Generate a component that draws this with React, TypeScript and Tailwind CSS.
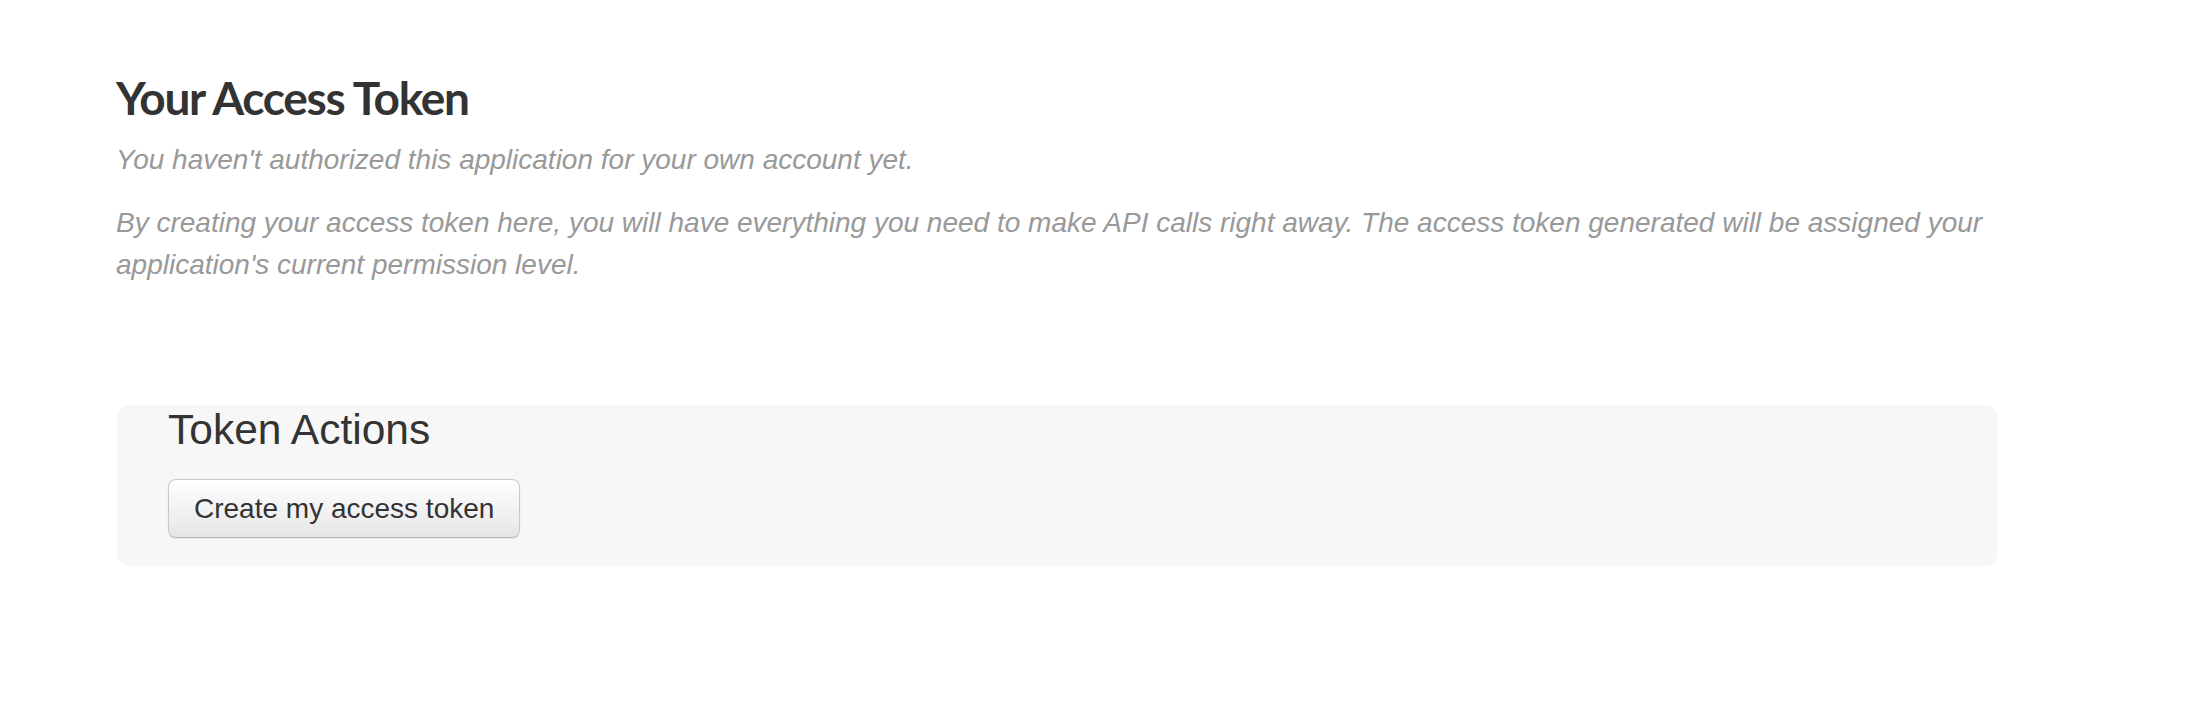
const App = () => {
  return (
    <div className="min-h-screen bg-white pl-[116px] pr-[199px] pt-[70px] font-['Liberation_Sans',Arial,sans-serif]">
      <h1 className="font-['Lato',sans-serif] font-bold text-[46px] leading-[56px] tracking-[-1.3px] text-[#333]">
        Your Access Token
      </h1>
      <p className="mt-[13px] text-[28px] leading-[42px] italic text-[#999]">
        You haven't authorized this application for your own account yet.
      </p>
      <p className="mt-[21px] text-[28px] leading-[42px] italic text-[#999]">
        By creating your access token here, you will have everything you need to make API calls right
        away. The access token generated will be assigned your application's current permission level.
      </p>

      <div className="mt-[119px] ml-px rounded-[12px] bg-[#f7f7f7] pl-[51px] pt-[4px] pb-[28px]">
        <h3 className="text-[42.5px] leading-[42px] text-[#333]">Token Actions</h3>
        <button className="mt-[28px] h-[59px] px-[25px] rounded-[8px] border border-[#c8c8c8] border-b-[#b3b3b3] bg-gradient-to-b from-white to-[#e6e6e6] text-[28px] text-[#333] shadow-[0_1px_2px_rgba(0,0,0,0.08)]">
          Create my access token
        </button>
      </div>
    </div>
  );
};

export default App;
